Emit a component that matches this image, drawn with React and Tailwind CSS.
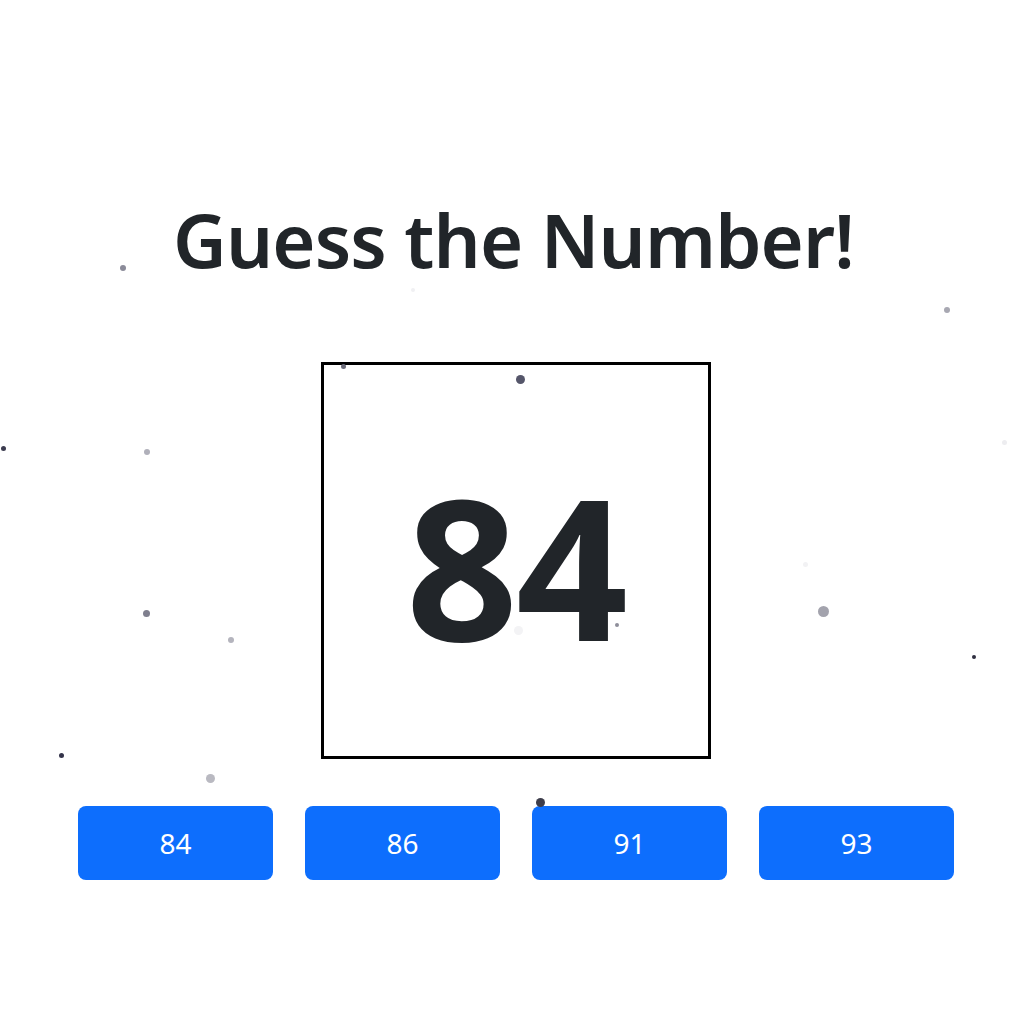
import React from "react";

// Floating background particles: [x, y, diameter, colour]
const particles = [
  [123, 268, 6, "#8b8b99"],
  [413, 290, 4, "#f0f0f3"],
  [343, 366, 5, "#6b6b7a"],
  [520, 379, 9, "#55566a"],
  [947, 310, 6, "#a8a8b2"],
  [3, 448, 5, "#3c3c50"],
  [147, 452, 6, "#b0b0ba"],
  [1004, 442, 5, "#ededf0"],
  [146, 613, 7, "#7f7f8e"],
  [231, 640, 6, "#b4b4bd"],
  [805, 564, 5, "#f2f2f4"],
  [823, 611, 11, "#a3a3ad"],
  [974, 657, 4, "#2f2f40"],
  [61, 755, 5, "#33334a"],
  [210, 778, 9, "#b9b9c1"],
  [540, 802, 9, "#3d3d4b"],
  [617, 625, 4, "#8e8e9a"],
  [518, 630, 9, "#f3f3f5"],
];

const choices = [84, 86, 91, 93];

export default function App() {
  return (
    <div
      className="relative w-[1024px] h-[1024px] overflow-hidden bg-white text-[#212529]"
      style={{ fontFamily: '"Noto Sans", "Open Sans", sans-serif' }}
    >
      <div className="relative z-10 flex flex-col items-center pt-[196px] pl-[8px]">
        <h1 className="mr-[5px] text-[74px] leading-[88px] font-semibold tracking-[-0.85px]">
          Guess the Number!
        </h1>
        <div className="mt-[78px] w-[390px] h-[397px] border-[3px] border-black flex items-center justify-center">
          <span className="text-[196px] leading-none font-bold tracking-[-2px] pt-[8px]">
            84
          </span>
        </div>
        <div className="mt-[47px] grid grid-cols-4 gap-[32px] w-[876px]">
          {choices.map((n) => (
            <button
              key={n}
              className="h-[74px] rounded-[8px] bg-[#0d6efd] text-white text-[28px] leading-none"
            >
              {n}
            </button>
          ))}
        </div>
      </div>
      {particles.map(([x, y, d, c], i) => (
        <span
          key={i}
          className="absolute z-20 rounded-full"
          style={{
            left: x - d / 2,
            top: y - d / 2,
            width: d,
            height: d,
            background: c,
          }}
        />
      ))}
    </div>
  );
}
